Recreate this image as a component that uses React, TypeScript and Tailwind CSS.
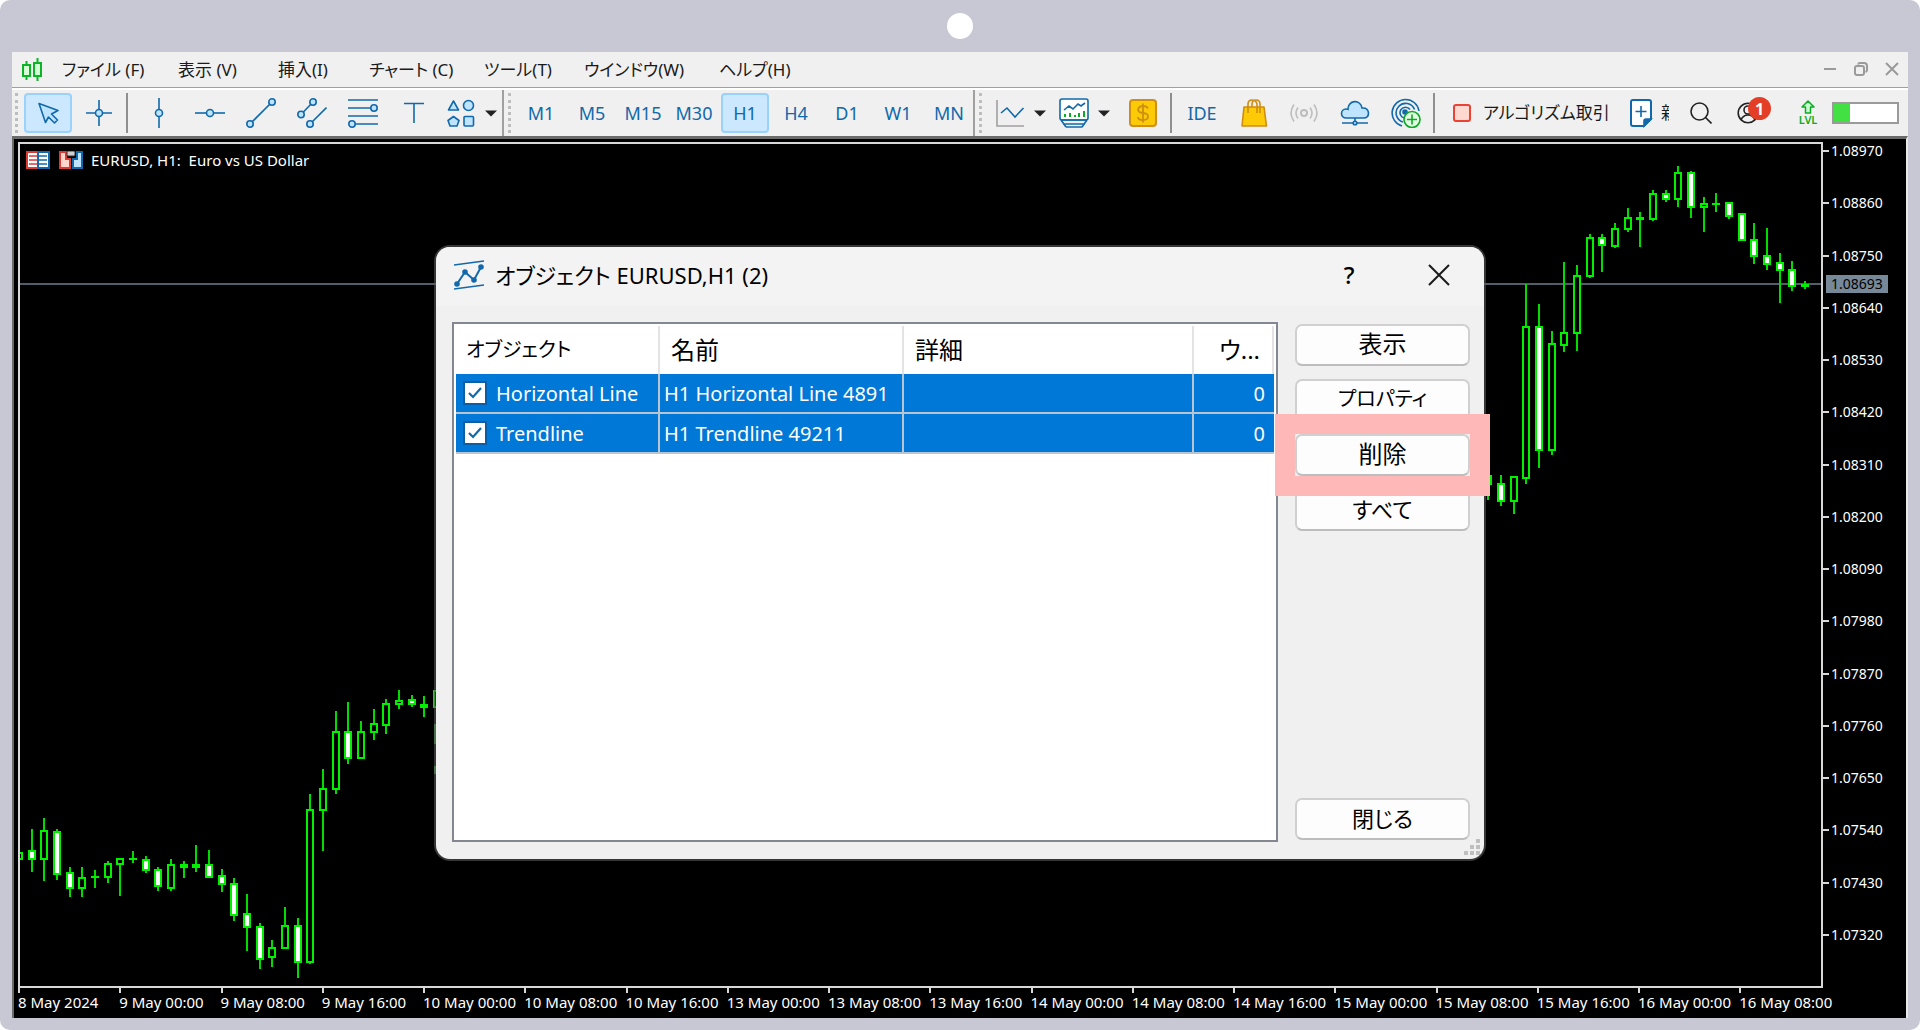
import React from "react";

const BLUE = "#1169ab";
const SKY = "#bfe4ff";
const GREEN = "#0bab24";

type Candle = { i: number; high: number; top: number; bottom: number; low: number; kind: "up" | "down" | "flat" };

const c = (i: number, high: number, top: number, bottom: number, low: number, kind: Candle["kind"]): Candle => ({
  i, high, top, bottom, low, kind,
});

const candles: Candle[] = [
  c(0, 852, 852, 859, 859, "up"),
  c(1, 829, 850, 859, 872, "down"),
  c(2, 818, 830, 859, 881, "up"),
  c(3, 829, 831, 874, 880, "down"),
  c(4, 867, 872, 888, 897, "down"),
  c(5, 867, 877, 888, 897, "up"),
  c(6, 870, 876, 877, 888, "flat"),
  c(7, 861, 863, 877, 883, "up"),
  c(8, 858, 858, 864, 896, "up"),
  c(9, 851, 858, 859, 863, "flat"),
  c(10, 856, 859, 870, 873, "down"),
  c(11, 867, 869, 886, 891, "down"),
  c(12, 859, 864, 888, 891, "up"),
  c(13, 861, 864, 867, 878, "flat"),
  c(14, 845, 864, 867, 872, "flat"),
  c(15, 850, 864, 877, 878, "down"),
  c(16, 869, 875, 884, 892, "down"),
  c(17, 878, 883, 915, 921, "down"),
  c(18, 894, 913, 927, 951, "down"),
  c(19, 923, 926, 959, 969, "down"),
  c(20, 940, 947, 957, 967, "up"),
  c(21, 907, 925, 948, 948, "up"),
  c(22, 918, 925, 962, 978, "down"),
  c(23, 794, 809, 962, 964, "up"),
  c(24, 769, 788, 810, 851, "up"),
  c(25, 711, 731, 789, 794, "up"),
  c(26, 702, 731, 758, 764, "down"),
  c(27, 721, 731, 758, 758, "up"),
  c(28, 709, 723, 732, 740, "up"),
  c(29, 699, 703, 725, 734, "up"),
  c(30, 690, 700, 704, 709, "up"),
  c(31, 695, 699, 704, 707, "down"),
  c(32, 696, 704, 707, 717, "flat"),
  c(33, 690, 690, 707, 707, "up"),
  c(116, 475, 475, 484, 500, "down"),
  c(117, 475, 483, 501, 506, "down"),
  c(118, 476, 476, 501, 514, "up"),
  c(119, 284, 326, 478, 484, "up"),
  c(120, 304, 326, 450, 468, "down"),
  c(121, 331, 343, 450, 455, "up"),
  c(122, 262, 332, 345, 352, "up"),
  c(123, 265, 275, 333, 351, "up"),
  c(124, 234, 237, 276, 278, "up"),
  c(125, 234, 237, 245, 272, "down"),
  c(126, 223, 228, 246, 248, "up"),
  c(127, 208, 217, 229, 232, "up"),
  c(128, 212, 217, 219, 247, "flat"),
  c(129, 190, 193, 219, 221, "up"),
  c(130, 190, 193, 199, 202, "down"),
  c(131, 166, 172, 199, 207, "up"),
  c(132, 171, 172, 207, 218, "down"),
  c(133, 197, 203, 207, 232, "up"),
  c(134, 193, 203, 204, 212, "flat"),
  c(135, 202, 202, 216, 219, "down"),
  c(136, 213, 213, 240, 240, "down"),
  c(137, 223, 239, 256, 264, "down"),
  c(138, 228, 255, 264, 270, "down"),
  c(139, 253, 262, 270, 303, "down"),
  c(140, 261, 269, 286, 291, "down"),
  c(141, 281, 284, 286, 289, "flat"),
];

const prices = [
  "1.08970", "1.08860", "1.08750", "1.08640", "1.08530", "1.08420", "1.08310", "1.08200",
  "1.08090", "1.07980", "1.07870", "1.07760", "1.07650", "1.07540", "1.07430", "1.07320",
];

const times = [
  "8 May 2024", "9 May 00:00", "9 May 08:00", "9 May 16:00", "10 May 00:00", "10 May 08:00",
  "10 May 16:00", "13 May 00:00", "13 May 08:00", "13 May 16:00", "14 May 00:00", "14 May 08:00",
  "14 May 16:00", "15 May 00:00", "15 May 08:00", "15 May 16:00", "16 May 00:00", "16 May 08:00",
];

function CandleMark({ d }: { d: Candle }) {
  const x = Math.round(19 + (d.i * 38) / 3);
  return (
    <g shapeRendering="crispEdges">
      {d.high < d.top && <rect x={x - 1} y={d.high} width="2" height={d.top - d.high} fill="#00dc00" />}
      {d.low > d.bottom && <rect x={x - 1} y={d.bottom} width="2" height={d.low - d.bottom} fill="#00dc00" />}
      {d.kind === "flat" ? (
        <rect x={x - 4} y={d.top} width="8" height={d.bottom - d.top + 1} fill="#00f000" />
      ) : (
        <rect
          x={x - 3}
          y={d.top + 1}
          width="6"
          height={Math.max(d.bottom - d.top - 1, 2)}
          fill={d.kind === "up" ? "#000" : "#fff"}
          stroke="#00f000"
          strokeWidth="2"
        />
      )}
    </g>
  );
}

function Icon({ children, w = 30 }: { children: React.ReactNode; w?: number }) {
  return (
    <svg
      width={w}
      height="30"
      viewBox={`0 0 ${w} 30`}
      fill="none"
      stroke={BLUE}
      strokeWidth="1.6"
      className="shrink-0"
      aria-hidden="true"
    >
      {children}
    </svg>
  );
}

function Grip() {
  return <span className="h-10 w-0 shrink-0 border-l-[3px] border-dotted border-[#bdbdbd]" />;
}

function Divider() {
  return <span className="h-10 w-[2px] shrink-0 bg-[#8f8f8f]" />;
}

function GroupEdge() {
  return <span className="w-[2px] shrink-0 self-stretch bg-[#a0a0a0]" />;
}

function Tool({
  label,
  active,
  width = "w-[51px]",
  children,
}: {
  label: string;
  active?: boolean;
  width?: string;
  children: React.ReactNode;
}) {
  return (
    <button
      type="button"
      aria-label={label}
      aria-pressed={active}
      className={`flex h-10 shrink-0 items-center justify-center rounded-[4px] ${width} ${
        active ? "border-2 border-[#99d1ff] bg-[#cce8ff]" : ""
      }`}
    >
      {children}
    </button>
  );
}

function Caret() {
  return (
    <svg width="12" height="7" viewBox="0 0 12 7" className="shrink-0" aria-hidden="true">
      <path d="M0 .5h12L6 6.5z" fill="#222" />
    </svg>
  );
}

function MenuBar() {
  const menus: [string, string][] = [
    ["ファイル (F)", "w-[116px]"],
    ["表示 (V)", "w-[100px]"],
    ["挿入(I)", "w-[91px]"],
    ["チャート (C)", "w-[115px]"],
    ["ツール(T)", "w-[100px]"],
    ["ウインドウ(W)", "w-[135px]"],
    ["ヘルプ(H)", "w-[100px]"],
  ];
  return (
    <header className="flex h-[36px] items-center border-b border-[#a0a0a0] bg-[#f0f0f0] pl-[10px] pr-[9px]">
      <svg width="20" height="24" viewBox="0 0 20 24" fill="#d5ffd5" stroke="#0cb428" strokeWidth="2" className="mr-5" aria-hidden="true">
        <path d="M4.5 3v4M4.5 18v4M15.500 0v4M15.500 18v5" />
        <rect x="1" y="7" width="7" height="11" />
        <rect x="12" y="5" width="7" height="13" />
      </svg>
      <nav className="flex flex-1 text-[17px] leading-6 text-[#1a1a1a]">
        {menus.map(([m, w]) => (
          <button key={m} type="button" className={`shrink-0 whitespace-nowrap text-left ${w}`}>
            {m}
          </button>
        ))}
      </nav>
      <div className="flex items-center gap-[17px] pb-[2px]">
        <button type="button" aria-label="最小化">
          <svg width="14" height="14" viewBox="0 0 14 14"><path d="M1 7h12" stroke="#9a9a9a" strokeWidth="2" /></svg>
        </button>
        <button type="button" aria-label="元に戻す">
          <svg width="14" height="14" viewBox="0 0 14 14" fill="none" stroke="#9a9a9a" strokeWidth="2">
            <rect x="1" y="4" width="9" height="9" rx="2" />
            <path d="M4 2.500Q4.500 1 6 1h4q3 0 3 3v4q0 1.500-1.500 2" />
          </svg>
        </button>
        <button type="button" aria-label="閉じる">
          <svg width="14" height="14" viewBox="0 0 14 14"><path d="M1 1l12 12M13 1L1 13" stroke="#9a9a9a" strokeWidth="2" /></svg>
        </button>
      </div>
    </header>
  );
}

function Toolbar() {
  const frames: [string, boolean][] = [
    ["M1", false], ["M5", false], ["M15", false], ["M30", false], ["H1", true],
    ["H4", false], ["D1", false], ["W1", false], ["MN", false],
  ];
  return (
    <div className="flex h-12 items-center border-t-2 border-white bg-[#f0f0f0] pl-[3px] text-[18px] text-[#1169ab]">
      <Grip />
      <span className="w-[6px] shrink-0" />
      <Tool label="カーソル" active width="w-12">
        <Icon>
          <path d="M6 5.500L25 12.500L18.500 16L24.500 22L21.500 25L15.500 19L12.500 24.500Z" fill={SKY} strokeLinejoin="round" />
        </Icon>
      </Tool>
      <Tool label="クロスヘア" width="w-[54px]">
        <Icon>
          <path d="M15 2v26M2 15h26" />
          <circle cx="15" cy="15" r="3.500" fill={SKY} />
        </Icon>
      </Tool>
      <Divider />
      <span className="w-[5px] shrink-0" />
      <Tool label="垂直線">
        <Icon>
          <path d="M15 0v30" />
          <circle cx="15" cy="15" r="3.500" fill={SKY} />
        </Icon>
      </Tool>
      <Tool label="水平線">
        <Icon>
          <path d="M0 15h30" />
          <circle cx="15" cy="15" r="3.500" fill={SKY} />
        </Icon>
      </Tool>
      <Tool label="トレンドライン">
        <Icon>
          <path d="M4 26L26 4" />
          <circle cx="4" cy="26" r="3.200" fill={SKY} />
          <circle cx="26" cy="4" r="3.200" fill={SKY} />
        </Icon>
      </Tool>
      <Tool label="等距離チャネル">
        <Icon>
          <path d="M4 16.500L16 4M13 26L29.500 9.500" />
          <circle cx="4" cy="16.500" r="3.200" fill={SKY} />
          <circle cx="16" cy="4" r="3.200" fill={SKY} />
          <circle cx="13" cy="26" r="3.200" fill={SKY} />
        </Icon>
      </Tool>
      <Tool label="フィボナッチ">
        <Icon>
          <path d="M0 2h30M0 10h24M0 18h30M6 26h24" />
          <circle cx="26" cy="10" r="3.200" fill={SKY} />
          <circle cx="4" cy="26" r="3.200" fill={SKY} />
        </Icon>
      </Tool>
      <Tool label="テキスト">
        <Icon>
          <path d="M5 5.500h20M15 5.500v19.500" />
        </Icon>
      </Tool>
      <span className="w-[2px] shrink-0" />
      <Tool label="図形" width="w-[40px]">
        <Icon>
          <g fill={SKY} strokeLinejoin="round">
            <path d="M7.500 3L12.500 12H2.500Z" />
            <circle cx="22.500" cy="7.500" r="5" />
            <path d="M7.500 18.500L13 22.500L11 28H4L2 22.500Z" />
            <rect x="18" y="18.500" width="9.500" height="9.500" rx="1" />
          </g>
        </Icon>
      </Tool>
      <span className="w-1 shrink-0" />
      <Caret />
      <span className="w-[5px] shrink-0" />
      <GroupEdge />
      <span className="w-1 shrink-0" />
      <Grip />
      <span className="w-[6px] shrink-0" />
      <div className="flex gap-[3px]">
        {frames.map(([f, on]) => (
          <Tool key={f} label={f} active={on} width="w-12">
            {f}
          </Tool>
        ))}
      </div>
      <GroupEdge />
      <span className="w-1 shrink-0" />
      <Grip />
      <span className="w-[13px] shrink-0" />
      <Tool label="ラインチャート" width="w-[30px]">
        <Icon>
          <path d="M2 2v26h27" stroke="#a0a0a0" />
          <path d="M6 15l6-5 8 9 8.500-9" />
        </Icon>
      </Tool>
      <span className="w-[9px] shrink-0" />
      <Caret />
      <span className="w-[13px] shrink-0" />
      <Tool label="インディケータ" width="w-[30px]">
        <Icon>
          <rect x="1" y="1" width="28" height="21" rx="2" fill="#fff" />
          <path d="M2 22h26M4 26h22M7 29h16M2 22l5 7M28 22l-5 7" />
          <path d="M5 12l5-4 4 3 5-5 3 2 4-3" />
          <path d="M6 19v-3M11 19v-4M16 19v-2M20 19v-4M25 19v-6" stroke={GREEN} strokeWidth="2" />
        </Icon>
      </Tool>
      <span className="w-[9px] shrink-0" />
      <Caret />
      <span className="w-[17px] shrink-0" />
      <Tool label="取引" width="w-[32px]">
        <Icon>
          <g stroke="#cf8e14">
            <rect x="2" y="2" width="26" height="26" rx="3" fill="#fccb05" strokeWidth="2" />
            <path d="M20 10.500Q19 8 15 8t-5 3.200Q10 14.500 15 15t5 3.500Q20 22 15 22t-5-3M15 5.500v19" strokeWidth="1.800" />
          </g>
        </Icon>
      </Tool>
      <span className="w-[11px] shrink-0" />
      <Divider />
      <Tool label="IDE" width="w-[60px]">
        IDE
      </Tool>
      <span className="w-[6px] shrink-0" />
      <Tool label="マーケット" width="w-[32px]">
        <Icon>
          <g stroke="#d08c10">
            <path d="M5 9h20l2.500 19H3z" fill="#fccb05" strokeLinejoin="round" />
            <path d="M9 15V6q0-4 4-4t5 4v9M13 9V6q0-4 4-4t4 4v9" />
          </g>
        </Icon>
      </Tool>
      <span className="w-2 shrink-0" />
      <Tool label="シグナル">
        <Icon>
          <g stroke="#bdbdbd">
            <circle cx="15" cy="15" r="3" strokeWidth="2" />
            <path d="M9 9.500q-4 5.500 0 11M5 6.500q-6 8.500 0 17M21 9.500q4 5.500 0 11M25 6.500q6 8.500 0 17" />
          </g>
        </Icon>
      </Tool>
      <Tool label="VPS">
        <Icon>
          <path d="M6 20a4.500 4.500 0 0 1 0-9q1 0 2 .3a7 7 0 0 1 14-1.300q6-.5 6.500 5 0 5-5 5z" fill={SKY} />
          <path d="M15 20v4M2 25h26" />
          <circle cx="15" cy="25" r="1.800" fill={SKY} />
        </Icon>
      </Tool>
      <Tool label="コピー">
        <Icon>
          <path d="M11 28A13.500 13.500 0 1 1 28 13M12 24A9.500 9.500 0 1 1 23.500 11.500M13 20A5.500 5.500 0 1 1 19 11.500" />
          <circle cx="14" cy="14" r="2" fill={BLUE} />
          <circle cx="21" cy="21.500" r="8" fill="#e4ffe4" stroke={GREEN} />
          <path d="M21 16.500v10M16 21.500h10" stroke={GREEN} />
        </Icon>
      </Tool>
      <span className="w-[2px] shrink-0" />
      <Divider />
      <button type="button" className="ml-[18px] flex shrink-0 items-center gap-3 text-[#1a1a1a]">
        <span className="size-[18px] rounded-[3px] border-2 border-[#ea4335] bg-[#ffd9d0]" />
        <span className="w-[120px] whitespace-nowrap text-left text-[17px]">アルゴリズム取引</span>
      </button>
      <button type="button" className="ml-[26px] flex shrink-0 items-center gap-2 text-[#1a1a1a]">
        <Icon w={24}>
          <path d="M4 2h16q2 0 2 2v17l-7 7H4q-2 0-2-2V4q0-2 2-2z" fill="#fff" strokeWidth="2" />
          <path d="M15 28v-5q0-2 2-2h5z" fill={BLUE} />
          <path d="M12 8v11M6.500 13.500h11" />
        </Icon>
        <span className="w-[8px] overflow-hidden whitespace-nowrap text-[17px]">新規注文</span>
      </button>
      <div className="ml-auto flex shrink-0 items-center pr-[9px]">
        <button type="button" aria-label="検索">
          <svg width="22" height="22" viewBox="0 0 22 22" fill="none" stroke="#222" strokeWidth="1.600">
            <circle cx="9.500" cy="9.500" r="8.500" />
            <path d="M15.500 15.500l6 6" />
          </svg>
        </button>
        <button type="button" aria-label="通知" className="relative ml-[25px]">
          <svg width="34" height="30" viewBox="0 0 34 30" fill="none" stroke="#222" strokeWidth="1.600">
            <circle cx="11" cy="15" r="9.800" />
            <circle cx="11" cy="12" r="4" />
            <path d="M4 22q2-5 7-5t7 5" />
          </svg>
          <span className="absolute -top-[1px] left-[11px] grid size-[23px] place-items-center rounded-full bg-[#e33e26] text-[16px] font-bold leading-none text-white">
            1
          </span>
        </button>
        <button type="button" aria-label="レベル" className="ml-[27px] flex w-5 flex-col items-center text-[#0bab24]">
          <svg width="14" height="14" viewBox="0 0 14 14" fill="#c9ffd0" stroke={GREEN} strokeWidth="1.500">
            <path d="M7 1l6 6h-3.500v6h-5V7H1z" strokeLinejoin="round" />
          </svg>
          <span className="text-[11px] font-semibold leading-[12px]">LVL</span>
        </button>
        <span className="ml-[14px] h-[22px] w-[67px] border-2 border-[#9a9a9a] bg-white">
          <span className="block h-full w-1/4 bg-[#42e042]" />
        </span>
      </div>
    </div>
  );
}

function Chart() {
  return (
    <main className="flex min-h-0 flex-1 flex-col border-l-2 border-r-2 border-t-[3px] border-l-[#6b6b6b] border-r-[#e8e8e8] border-t-[#6b6b6b] bg-black pl-1 pt-[3px] text-[14px] leading-[18px] text-white">
      <div className="flex min-h-0 flex-1">
        <section className="relative min-w-0 flex-1 border-2 border-[#d8d8d8]">
          <svg viewBox="20 144 1801 842" preserveAspectRatio="none" className="absolute inset-0 size-full" aria-hidden="true">
            <rect x="20" y="283" width="1801" height="2" fill="#525e6a" />
            {candles.map((d) => (
              <CandleMark key={d.i} d={d} />
            ))}
            <path d="M434 724h2v20h-2zM434 766h2v8h-2z" fill="#2f9a2f" />
          </svg>
          <div className="relative flex items-center pl-[6px] pt-[7px]">
            <svg width="24" height="18" viewBox="0 0 24 18" aria-hidden="true">
              <rect x="1" y="1" width="11" height="16" fill="#fff" stroke="#dd3a34" strokeWidth="2" />
              <rect x="12" y="1" width="11" height="16" fill="#fff" stroke="#1169ab" strokeWidth="2" />
              <path d="M3 5h8M3 9h8M3 13h8" stroke="#dd3a34" strokeWidth="1.500" />
              <path d="M13 5h8M13 9h8M13 13h8" stroke="#1169ab" strokeWidth="1.500" />
            </svg>
            <svg width="24" height="18" viewBox="0 0 24 18" className="ml-[9px]" aria-hidden="true">
              <path d="M1 1h6v7h4v9H1z" fill="#ffd5cc" stroke="#dd3a34" strokeWidth="2" />
              <path d="M23 1h-5v7h-4v9h9z" fill={SKY} stroke="#1169ab" strokeWidth="2" />
              <rect x="8" y="0" width="8" height="5" rx="1" fill="#d0d0d0" stroke="#333" />
            </svg>
            <span className="ml-2 whitespace-pre text-[15px]">EURUSD, H1:  Euro vs US Dollar</span>
          </div>
        </section>
        <aside className="relative w-[83px] shrink-0">
          <ol className="flex h-full flex-col justify-between pb-[44px]">
            {prices.map((p) => (
              <li key={p} className="flex items-center gap-[2px]">
                <span className="h-[2px] w-[6px] bg-[#d8d8d8]" />
                {p}
              </li>
            ))}
          </ol>
          <span className="absolute left-[3px] top-[15.700%] w-[62px] bg-[#778899] pl-[5px] text-black">1.08693</span>
        </aside>
      </div>
      <ol className="mr-[83px] flex h-[30px] shrink-0 text-[15px]">
        {times.map((t) => (
          <li key={t} className="w-[5.610%] shrink-0 whitespace-nowrap">
            <span className="block h-[5px] w-[2px] bg-[#d8d8d8]" />
            <span className="block">{t}</span>
          </li>
        ))}
      </ol>
    </main>
  );
}

function DialogButton({ children, size = "text-[22px]" }: { children: React.ReactNode; size?: string }) {
  return (
    <button
      type="button"
      className={`h-[42px] w-full shrink-0 rounded-[7px] border-2 border-[#d0d0d0] border-b-[#bdbdbd] bg-[#fdfdfd] pb-[2px] leading-none text-black ${size}`}
    >
      {children}
    </button>
  );
}

function ObjectRow({ kind, name }: { kind: string; name: string }) {
  return (
    <tr className="h-10 bg-[#0078d7] text-[20px] leading-6 text-white">
      <td className="border-b-2 border-r-2 border-[#b9c6d2] p-0 pl-[7px]">
        <label className="flex items-center gap-[9px] whitespace-nowrap">
          <span className="grid size-6 place-items-center">
            <input
              type="checkbox"
              defaultChecked
              className="col-start-1 row-start-1 size-6 appearance-none border-2 border-[#0b5ea6] bg-white"
            />
            <svg width="16" height="14" viewBox="0 0 16 14" fill="none" className="pointer-events-none col-start-1 row-start-1" aria-hidden="true">
              <path d="M2 7l4 4 8-9" stroke={BLUE} strokeWidth="2.200" />
            </svg>
          </span>
          <span className="pt-[2px]">{kind}</span>
        </label>
      </td>
      <td className="whitespace-nowrap border-b-2 border-r-2 border-[#b9c6d2] p-0 pl-1 pt-[2px]">{name}</td>
      <td className="border-b-2 border-r-2 border-[#b9c6d2] p-0" />
      <td className="border-b-2 border-[#b9c6d2] p-0 pr-[9px] pt-[2px] text-right">0</td>
    </tr>
  );
}

function ObjectsDialog() {
  return (
    <section
      role="dialog"
      aria-label="オブジェクト EURUSD,H1 (2)"
      className="flex h-[612px] w-[1048px] flex-col rounded-[14px] bg-[#f0f0f0] text-black shadow-[0_0_0_2px_rgba(90,90,90,0.6)]"
    >
      <header className="flex h-[59px] shrink-0 items-center rounded-t-[14px] bg-[#f3f3f3] pb-[3px] pl-[18px] pr-[34px]">
        <Icon>
          <path d="M0 5L30 1M0 29L30 25" />
          <path d="M3 24L11 12L20 20L27 7" strokeWidth="2" />
          <g fill={BLUE}>
            <circle cx="3" cy="24" r="2" />
            <circle cx="11" cy="12" r="2" />
            <circle cx="20" cy="20" r="2" />
            <circle cx="27" cy="7" r="2" />
          </g>
        </Icon>
        <h1 className="ml-[11px] flex-1 text-[22px] leading-8">オブジェクト EURUSD,H1 (2)</h1>
        <button type="button" aria-label="ヘルプ" className="mr-[71px] w-4 text-[24px] font-medium leading-8">
          ?
        </button>
        <button type="button" aria-label="閉じる">
          <svg width="22" height="22" viewBox="0 0 22 22">
            <path d="M1 1l20 20M21 1L1 21" stroke="#1a1a1a" strokeWidth="2" />
          </svg>
        </button>
      </header>
      <div className="relative flex min-h-0 flex-1 gap-[17px] pb-[17px] pl-4 pr-[14px] pt-4">
        <div className="min-w-0 flex-1 border-2 border-[#828790] bg-white p-[2px]">
          <table className="w-full table-fixed border-separate border-spacing-0">
            <colgroup>
              <col className="w-[204px]" />
              <col className="w-[244px]" />
              <col />
              <col className="w-[80px]" />
            </colgroup>
            <thead>
              <tr className="h-12 text-left text-[24px] leading-8">
                <th className="border-r-2 border-[#e3e3e3] p-0 pl-[10px] text-[20px] font-normal">オブジェクト</th>
                <th className="border-r-2 border-[#e3e3e3] p-0 pl-[11px] font-normal">名前</th>
                <th className="border-r-2 border-[#e3e3e3] p-0 pl-[11px] font-normal">詳細</th>
                <th className="border-r-2 border-[#e3e3e3] p-0 pr-3 text-right font-normal">ウ...</th>
              </tr>
            </thead>
            <tbody>
              <ObjectRow kind="Horizontal Line" name="H1 Horizontal Line 4891" />
              <ObjectRow kind="Trendline" name="H1 Trendline 49211" />
            </tbody>
          </table>
        </div>
        <div className="flex w-[175px] shrink-0 flex-col gap-[13px] pb-[2px] pt-[2px]">
          <DialogButton size="text-[24px]">表示</DialogButton>
          <DialogButton size="text-[20px]">プロパティ</DialogButton>
          <div className="relative z-10 flex">
            <DialogButton size="text-[24px]">削除</DialogButton>
            <span className="pointer-events-none absolute -inset-5 border-[20px] border-[#ffb8b8]" />
          </div>
          <DialogButton>すべて</DialogButton>
          <span className="flex-1" />
          <DialogButton>閉じる</DialogButton>
        </div>
        <svg width="16" height="16" viewBox="0 0 16 16" className="absolute bottom-1 right-1" aria-hidden="true">
          <path d="M12 0h4v4h-4zM6 6h4v4H6zM12 6h4v4h-4zM0 12h4v4H0zM6 12h4v4H6zM12 12h4v4h-4z" fill="#bfbfbf" />
        </svg>
      </div>
    </section>
  );
}

export default function App() {
  return (
    <div className="h-screen overflow-hidden bg-white font-['Noto_Sans','Noto_Sans_CJK_JP',sans-serif] [font-feature-settings:'palt']">
      <div className="relative flex h-full flex-col rounded-[10px] bg-[#c8c8d4] px-3 pb-3">
        <div className="flex h-[52px] shrink-0 items-center justify-center">
          <span className="size-[26px] rounded-full bg-white" />
        </div>
        <MenuBar />
        <Toolbar />
        <Chart />
        <div className="absolute inset-x-0 top-[247px] flex justify-center">
          <ObjectsDialog />
        </div>
      </div>
    </div>
  );
}
